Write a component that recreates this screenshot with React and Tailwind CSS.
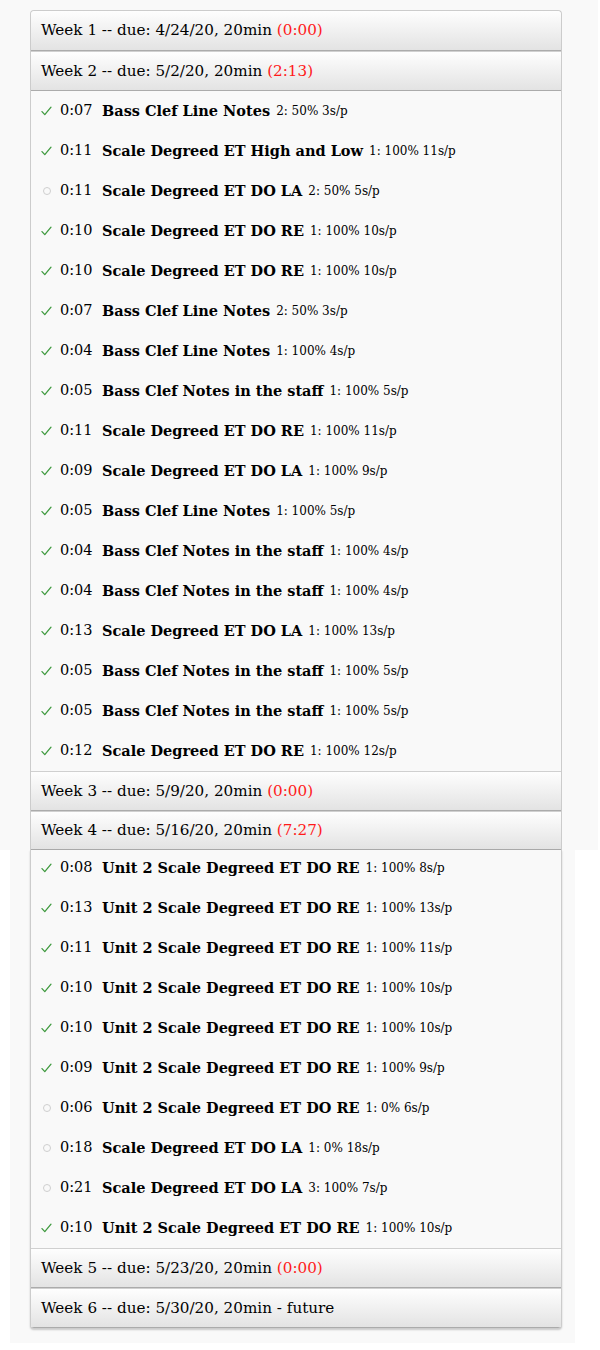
import React from "react";

const week2 = [
  [true, "0:07", "Bass Clef Line Notes", "2: 50% 3s/p"],
  [true, "0:11", "Scale Degreed ET High and Low", "1: 100% 11s/p"],
  [false, "0:11", "Scale Degreed ET DO LA", "2: 50% 5s/p"],
  [true, "0:10", "Scale Degreed ET DO RE", "1: 100% 10s/p"],
  [true, "0:10", "Scale Degreed ET DO RE", "1: 100% 10s/p"],
  [true, "0:07", "Bass Clef Line Notes", "2: 50% 3s/p"],
  [true, "0:04", "Bass Clef Line Notes", "1: 100% 4s/p"],
  [true, "0:05", "Bass Clef Notes in the staff", "1: 100% 5s/p"],
  [true, "0:11", "Scale Degreed ET DO RE", "1: 100% 11s/p"],
  [true, "0:09", "Scale Degreed ET DO LA", "1: 100% 9s/p"],
  [true, "0:05", "Bass Clef Line Notes", "1: 100% 5s/p"],
  [true, "0:04", "Bass Clef Notes in the staff", "1: 100% 4s/p"],
  [true, "0:04", "Bass Clef Notes in the staff", "1: 100% 4s/p"],
  [true, "0:13", "Scale Degreed ET DO LA", "1: 100% 13s/p"],
  [true, "0:05", "Bass Clef Notes in the staff", "1: 100% 5s/p"],
  [true, "0:05", "Bass Clef Notes in the staff", "1: 100% 5s/p"],
  [true, "0:12", "Scale Degreed ET DO RE", "1: 100% 12s/p"],
];

const week4 = [
  [true, "0:08", "Unit 2 Scale Degreed ET DO RE", "1: 100% 8s/p"],
  [true, "0:13", "Unit 2 Scale Degreed ET DO RE", "1: 100% 13s/p"],
  [true, "0:11", "Unit 2 Scale Degreed ET DO RE", "1: 100% 11s/p"],
  [true, "0:10", "Unit 2 Scale Degreed ET DO RE", "1: 100% 10s/p"],
  [true, "0:10", "Unit 2 Scale Degreed ET DO RE", "1: 100% 10s/p"],
  [true, "0:09", "Unit 2 Scale Degreed ET DO RE", "1: 100% 9s/p"],
  [false, "0:06", "Unit 2 Scale Degreed ET DO RE", "1: 0% 6s/p"],
  [false, "0:18", "Scale Degreed ET DO LA", "1: 0% 18s/p"],
  [false, "0:21", "Scale Degreed ET DO LA", "3: 100% 7s/p"],
  [true, "0:10", "Unit 2 Scale Degreed ET DO RE", "1: 100% 10s/p"],
];

const serif = "font-['Droid_Serif','DejaVu_Serif',serif]";

function Header({ label, red, extra, top = false, h = "h-[40px]" }) {
  return (
    <div
      className={`flex items-center ${h} pl-[10px] bg-linear-to-b from-[#fefefe] to-[#e3e3e3] border-b border-[#ababab] ${
        top ? "rounded-t-[4px]" : "border-t border-t-[#d0d0d0]"
      } text-[15.2px] text-black`}
    >
      <span>
        {label}
        {red && <span className="text-[#ff1a1a]"> {red}</span>}
        {extra}
      </span>
    </div>
  );
}

function Check() {
  return (
    <svg width="11" height="10" viewBox="0 0 11 10" className="block">
      <path d="M1 5.6 L3.8 8.6 L10 1.2" fill="none" stroke="#3f9a3f" strokeWidth="1.3" strokeLinecap="round" strokeLinejoin="round" />
    </svg>
  );
}

function Row({ done, time, name, stats }) {
  return (
    <div className="flex items-center h-[40px] pl-[10px] text-[14.5px] text-black">
      <span className="w-[19px] flex items-center">
        {done ? (
          <Check />
        ) : (
          <span className="inline-block w-[8px] h-[8px] rounded-full border border-[#cfcfcf] ml-[2px]" />
        )}
      </span>
      <span className="w-[42px]">{time}</span>
      <span className="font-bold">{name}</span>
      <span className="ml-[6px] text-[12px]">{stats}</span>
    </div>
  );
}

export default function App() {
  return (
    <div className={`w-[600px] h-[1350px] bg-white ${serif}`}>
      <div className="w-[598px] h-[850px] bg-[#f9f9f9] pt-[10px] pl-[30px] overflow-hidden">
        <div className="w-[532px] border border-b-0 border-[#cccccc] rounded-t-[4px] bg-[#f9f9f9]">
          <Header top label="Week 1 -- due: 4/24/20, 20min" red="(0:00)" />
          <Header label="Week 2 -- due: 5/2/20, 20min" red="(2:13)" />
          {week2.map((r, i) => (
            <Row key={i} done={r[0]} time={r[1]} name={r[2]} stats={r[3]} />
          ))}
          <Header label="Week 3 -- due: 5/9/20, 20min" red="(0:00)" />
          <Header label="Week 4 -- due: 5/16/20, 20min" red="(7:27)" h="h-[39px]" />
        </div>
      </div>
      <div className="ml-[10px] w-[565px] h-[493px] bg-[#f9f9f9] pl-[20px]">
        <div className="w-[532px] border border-t-0 border-[#cccccc] rounded-b-[4px] bg-[#f9f9f9] shadow-[0_1px_2px_rgba(0,0,0,0.2)] overflow-hidden">
          <div className="-mt-[2px]">
            {week4.map((r, i) => (
              <Row key={i} done={r[0]} time={r[1]} name={r[2]} stats={r[3]} />
            ))}
          </div>
          <Header label="Week 5 -- due: 5/23/20, 20min" red="(0:00)" />
          <Header label="Week 6 -- due: 5/30/20, 20min" extra=" - future" />
        </div>
      </div>
    </div>
  );
}
